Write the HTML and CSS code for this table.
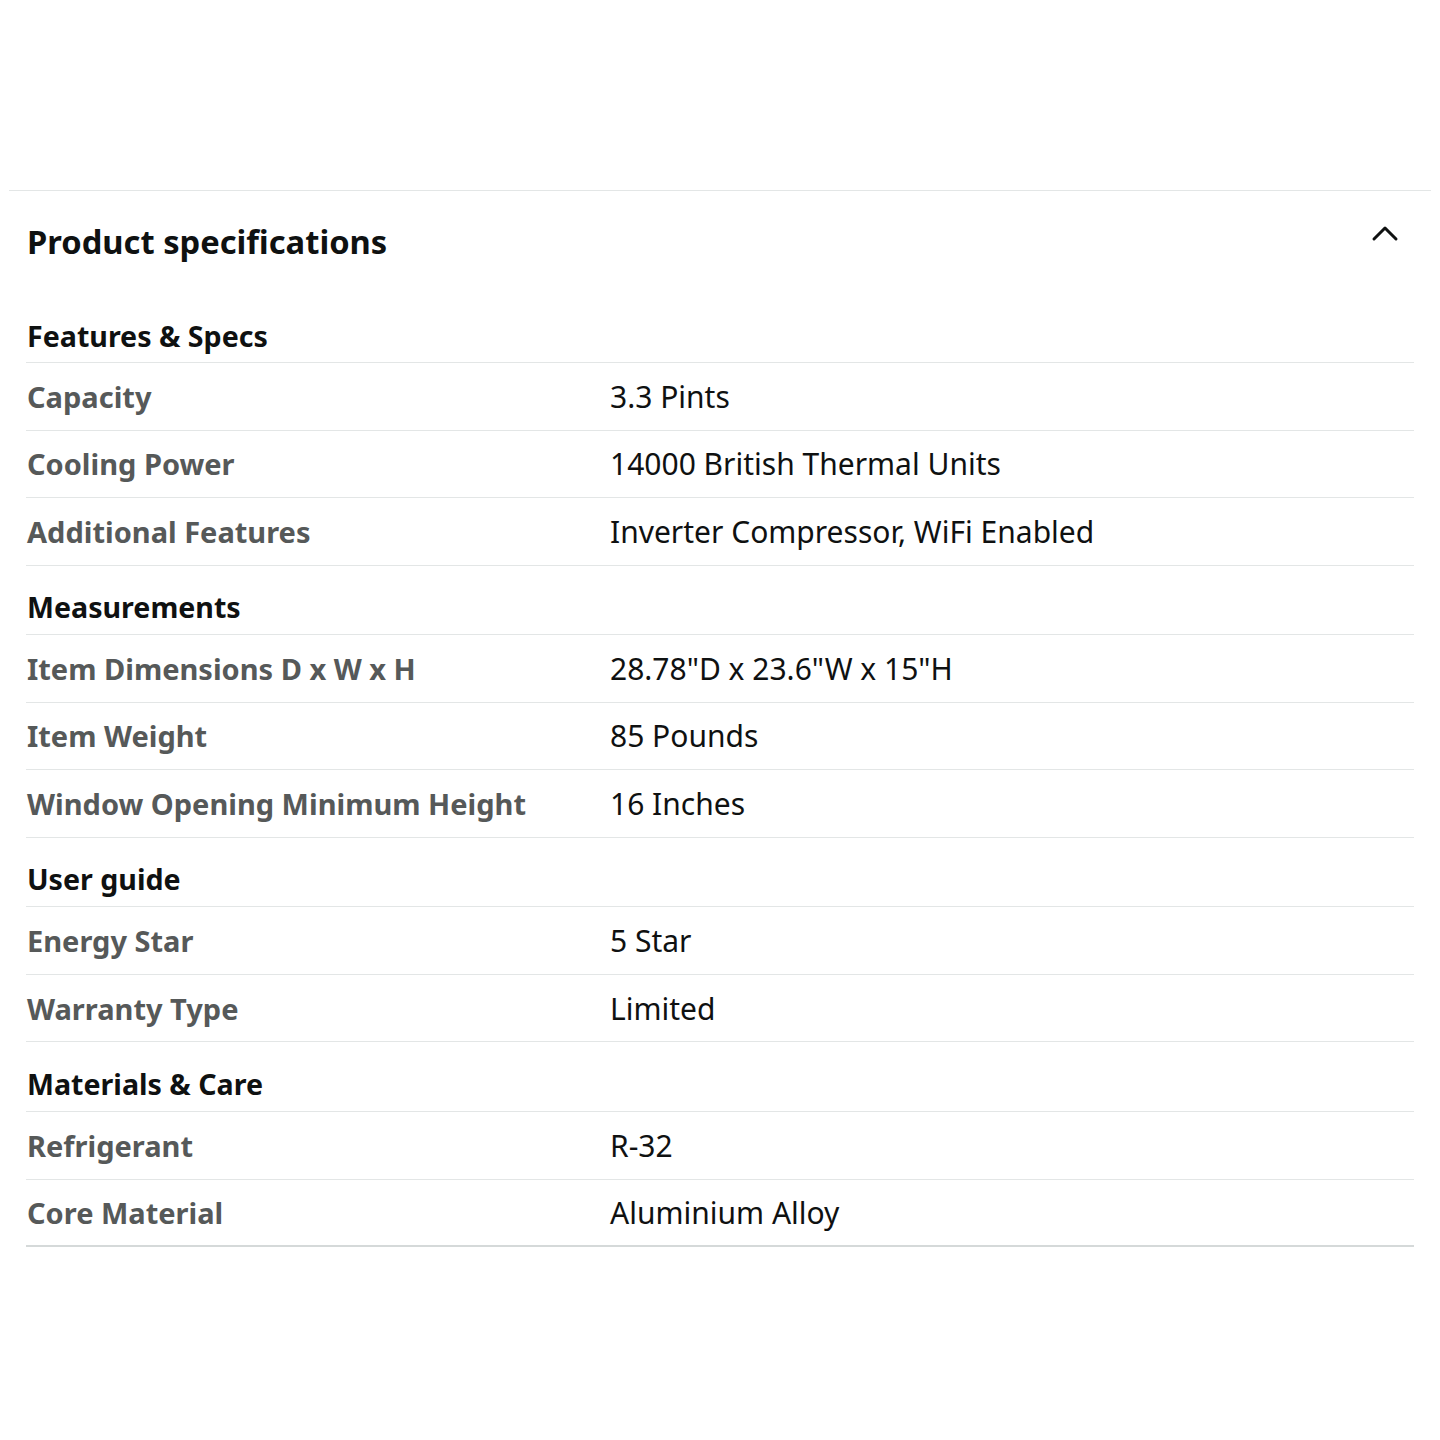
FILE: index.html
```html
<!DOCTYPE html>
<html>
<head>
<meta charset="utf-8">
<link rel="stylesheet" href="styles.css">
</head>
<body>
<div class="page">
  <div class="top-space"></div>
  <div class="panel">
    <div class="panel-head">
      <h2 class="title">Product specifications</h2>
      <svg class="chevron" width="28" height="20" viewBox="0 0 28 20"><path d="M3 16 L14 5 L25 16" fill="none" stroke="#0f1111" stroke-width="3" stroke-linecap="round" stroke-linejoin="round"/></svg>
    </div>
    <div class="specs">
      <div class="group first"><span>Features &amp; Specs</span></div>
      <div class="row"><span class="label">Capacity</span><span class="value">3.3 Pints</span></div>
      <div class="row"><span class="label">Cooling Power</span><span class="value">14000 British Thermal Units</span></div>
      <div class="row"><span class="label">Additional Features</span><span class="value">Inverter Compressor, WiFi Enabled</span></div>
      <div class="group"><span>Measurements</span></div>
      <div class="row"><span class="label">Item Dimensions D x W x H</span><span class="value">28.78"D x 23.6"W x 15"H</span></div>
      <div class="row"><span class="label">Item Weight</span><span class="value">85 Pounds</span></div>
      <div class="row"><span class="label">Window Opening Minimum Height</span><span class="value">16 Inches</span></div>
      <div class="group"><span>User guide</span></div>
      <div class="row"><span class="label">Energy Star</span><span class="value">5 Star</span></div>
      <div class="row"><span class="label">Warranty Type</span><span class="value">Limited</span></div>
      <div class="group"><span>Materials &amp; Care</span></div>
      <div class="row"><span class="label">Refrigerant</span><span class="value">R-32</span></div>
      <div class="row last"><span class="label">Core Material</span><span class="value">Aluminium Alloy</span></div>
    </div>
  </div>
</div>
</body>
</html>
```

FILE: styles.css
```css
* { box-sizing: border-box; }
html, body { margin: 0; padding: 0; background: #fff; }
body { font-family: "Noto Sans", "Open Sans", Arial, sans-serif; color: #0f1111; }
.page { width: 1440px; height: 1440px; }
.top-space { height: 190px; }
.panel { margin: 0 9px; border-top: 1px solid #e3e6e6; }
.panel-head {
  height: 100px;
  display: flex;
  align-items: center;
  justify-content: space-between;
  padding: 0 32px 0 18px;
}
.title { margin: 0; font-size: 32.7px; font-weight: 700; color: #0f1111; }
.chevron { display: block; margin-top: -16px; }
.specs { margin: 0 17px; }
.group {
  height: 69.7px;
  display: flex;
  align-items: flex-end;
  padding: 0 0 9px 1px;
  font-size: 28.6px;
  line-height: 36px;
  font-weight: 700;
  color: #0f1111;
  border-bottom: 1px solid #e3e6e6;
}
.group.first { height: 72px; padding-bottom: 8px; }
.row {
  height: 67.5px;
  display: grid;
  grid-template-columns: 583px 1fr;
  align-items: center;
  padding-left: 1px;
  font-size: 29px;
  border-bottom: 1px solid #e3e6e6;
}
.row.last { border-bottom: 2px solid #d5d9d9; }
.label { font-weight: 700; color: #565959; }
.value { color: #0f1111; font-size: 30px; }
```
